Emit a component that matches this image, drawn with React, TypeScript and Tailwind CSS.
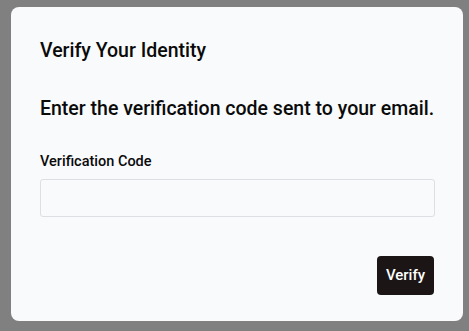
export default function App() {
  return (
    <div
      className="h-[331px] w-[469px] bg-[#808080] pl-[11px] pt-[7px]"
      style={{ fontFamily: 'Roboto, "Liberation Sans", sans-serif' }}
    >
      <div className="flex h-[314px] w-[452px] flex-col rounded-lg bg-[#f8fafc] px-[29px] pt-[30px]">
        <h2 className="text-[19.5px] font-medium leading-[28px] text-[#0a0a0a]">Verify Your Identity</h2>
        <p className="mt-[30px] whitespace-nowrap text-[19.5px] font-medium leading-[28px] text-[#0a0a0a]">
          Enter the verification code sent to your email.
        </p>
        <label className="mt-[29px] text-[14.5px] font-medium leading-[20px] text-[#0a0a0a]">Verification Code</label>
        <input
          type="text"
          className="mt-[7px] h-[38px] w-[395px] rounded-[3px] border border-[#dcdfe4] bg-[#f8fafc] px-3 text-sm outline-none"
        />
        <div className="mt-[39px] flex justify-end">
          <button className="h-[39px] w-[57px] rounded-[4px] bg-[#1c1515] text-[15px] font-medium text-white">
            Verify
          </button>
        </div>
      </div>
    </div>
  );
}
